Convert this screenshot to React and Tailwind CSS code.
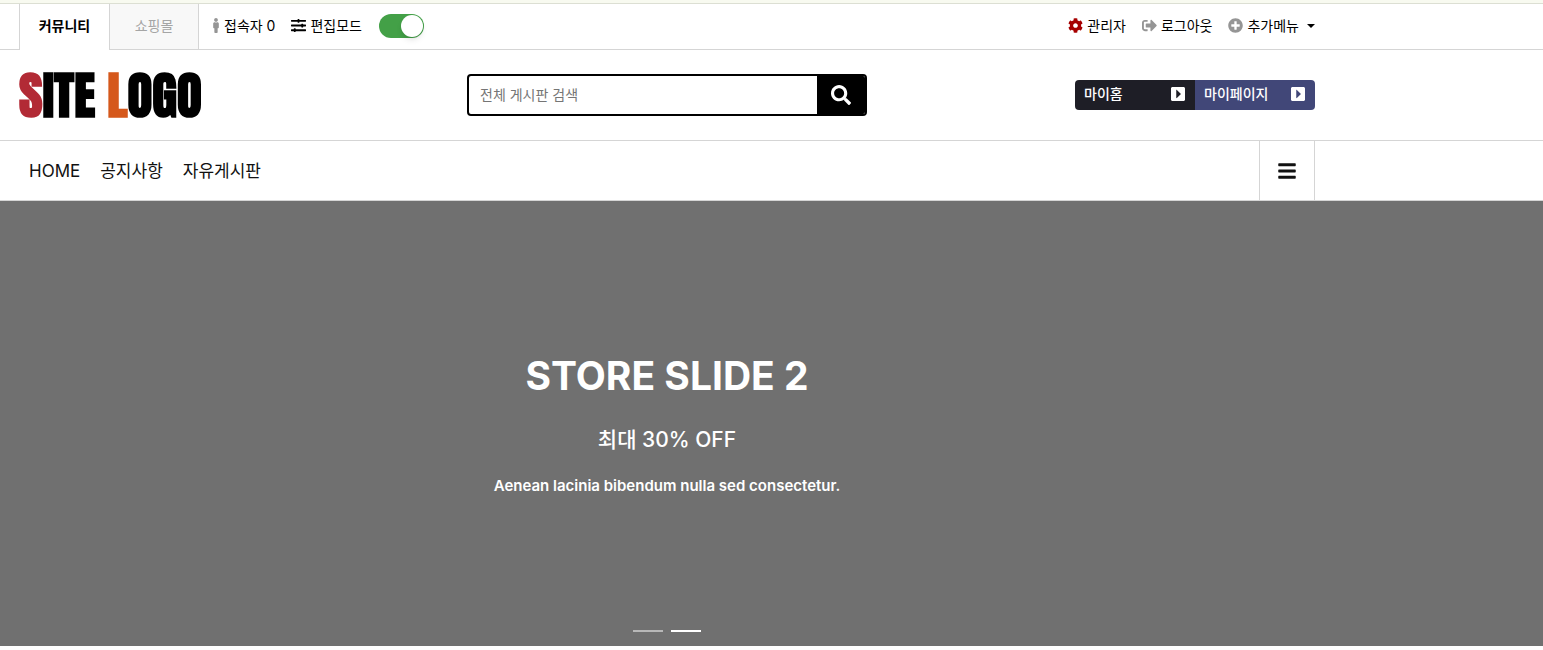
import React from 'react';
import {
  FaBars,
  FaCaretSquareRight,
  FaCog,
  FaMale,
  FaPlusCircle,
  FaSearch,
  FaSignOutAlt,
  FaSlidersH,
} from 'react-icons/fa';

const menus = ['HOME', '공지사항', '자유게시판'];

function Container({ className = '', children }) {
  return <div className={`ml-[19px] max-w-[1296px] ${className}`}>{children}</div>;
}

function TopBar() {
  return (
    <div className="border-b border-[#d5d5d5] text-sm">
      <Container className="flex h-[45px] items-center justify-between">
        <div className="flex items-center">
          <a href="#community" className="-mb-px flex h-[46px] w-[90px] items-center justify-center border-l border-[#d5d5d5] bg-white pb-[3px] font-bold">
            커뮤니티
          </a>
          <a href="#shop" className="flex h-[45px] w-[90px] items-center justify-center border-x border-[#d5d5d5] bg-[#f8f8f8] pb-[2px] text-[#a5a5a5]">
            쇼핑몰
          </a>
          <a href="#current" className="ml-3 flex items-center gap-[3px] pb-[2px]">
            <FaMale className="h-[15px] w-[10px] text-[#959595]" />
            <span>접속자 0</span>
          </a>
          <label htmlFor="edit-mode" className="ml-4 flex items-center gap-1 pb-[2px]">
            <FaSlidersH className="size-[15px]" />
            <span>편집모드</span>
          </label>
          <input
            id="edit-mode"
            type="checkbox"
            role="switch"
            defaultChecked
            className="mb-[2px] ml-[17px] flex h-6 w-[45px] appearance-none items-center justify-end rounded-full bg-[#43a047] px-px before:size-[22px] before:rounded-full before:bg-white before:shadow-md"
          />
        </div>
        <div className="flex items-center gap-4 pb-[2px]">
          <a href="#admin" className="flex items-center gap-1">
            <FaCog className="size-[15px] text-[#a60000]" />
            <span>관리자</span>
          </a>
          <a href="#logout" className="flex items-center gap-1">
            <FaSignOutAlt className="size-[15px] text-[#959595]" />
            <span>로그아웃</span>
          </a>
          <button type="button" className="flex items-center gap-1">
            <FaPlusCircle className="size-[15px] text-[#959595]" />
            <span>추가메뉴</span>
            <span className="ml-1 border-x-4 border-t-4 border-x-transparent border-t-black" />
          </button>
        </div>
      </Container>
    </div>
  );
}

function Header() {
  return (
    <header className="border-b border-[#d5d5d5]">
      <Container className="grid h-[90px] grid-cols-[1fr_400px_1fr] items-center">
        <a
          href="#home"
          className="font-['Impact','Anton','Roboto_Condensed',sans-serif] text-[51px] leading-none font-bold whitespace-nowrap"
        >
          <span className="text-[#b22a35]">S</span>ITE <span className="text-[#d5581b]">L</span>OGO
        </a>
        <form className="flex h-[42px] overflow-hidden rounded border-2 border-black" onSubmit={(e) => e.preventDefault()}>
          <input
            type="search"
            aria-label="전체 게시판 검색"
            placeholder="전체 게시판 검색"
            className="min-w-0 flex-1 px-[11px] text-sm outline-none placeholder:text-[#757575]"
          />
          <button type="submit" aria-label="검색" className="flex w-12 items-center justify-center bg-black text-white">
            <FaSearch className="size-5" />
          </button>
        </form>
        <div className="flex h-[30px] justify-self-end overflow-hidden rounded text-sm font-medium text-white">
          <a href="#myhome" className="flex w-[120px] items-center justify-between bg-[#1e1e26] px-[9px] pb-[2px]">
            마이홈
            <FaCaretSquareRight className="size-4" />
          </a>
          <a href="#mypage" className="flex w-[120px] items-center justify-between bg-[#414778] px-[9px] pb-[2px]">
            마이페이지
            <FaCaretSquareRight className="size-4" />
          </a>
        </div>
      </Container>
    </header>
  );
}

function Nav() {
  return (
    <nav className="border-b border-[#d5d5d5] text-[#111]">
      <Container className="flex h-[59px] items-stretch justify-between">
        <ul className="flex items-center gap-5 pt-[2px] pl-[10px] text-[17px]">
          {menus.map((menu) => (
            <li key={menu}>
              <a href="#menu">{menu}</a>
            </li>
          ))}
        </ul>
        <button type="button" aria-label="전체메뉴" className="flex w-14 items-center justify-center border-x border-[#d5d5d5]">
          <FaBars className="size-5" />
        </button>
      </Container>
    </nav>
  );
}

function Slide() {
  return (
    <section className="bg-[#707070] text-white">
      <Container className="flex h-[445px] flex-col items-center pt-[145px] text-center">
        <h2 className="text-[39px] leading-[60px] font-bold">STORE SLIDE 2</h2>
        <p className="mt-4 text-[21px] leading-9 font-medium">최대 30% OFF</p>
        <p className="mt-4 text-[15px] leading-6 font-semibold">Aenean lacinia bibendum nulla sed consectetur.</p>
        <div className="mt-auto flex gap-2 pb-[14px]">
          <button type="button" aria-label="1" className="h-[2px] w-[30px] bg-white/50" />
          <button type="button" aria-label="2" className="h-[2px] w-[30px] bg-white" />
        </div>
      </Container>
    </section>
  );
}

export default function App() {
  return (
    <div className="bg-white font-['Inter','Noto_Sans_CJK_KR',sans-serif] text-black">
      <div className="h-1 border-b border-[#dcdfd3] bg-[#f8faf0]" />
      <TopBar />
      <Header />
      <Nav />
      <Slide />
    </div>
  );
}
